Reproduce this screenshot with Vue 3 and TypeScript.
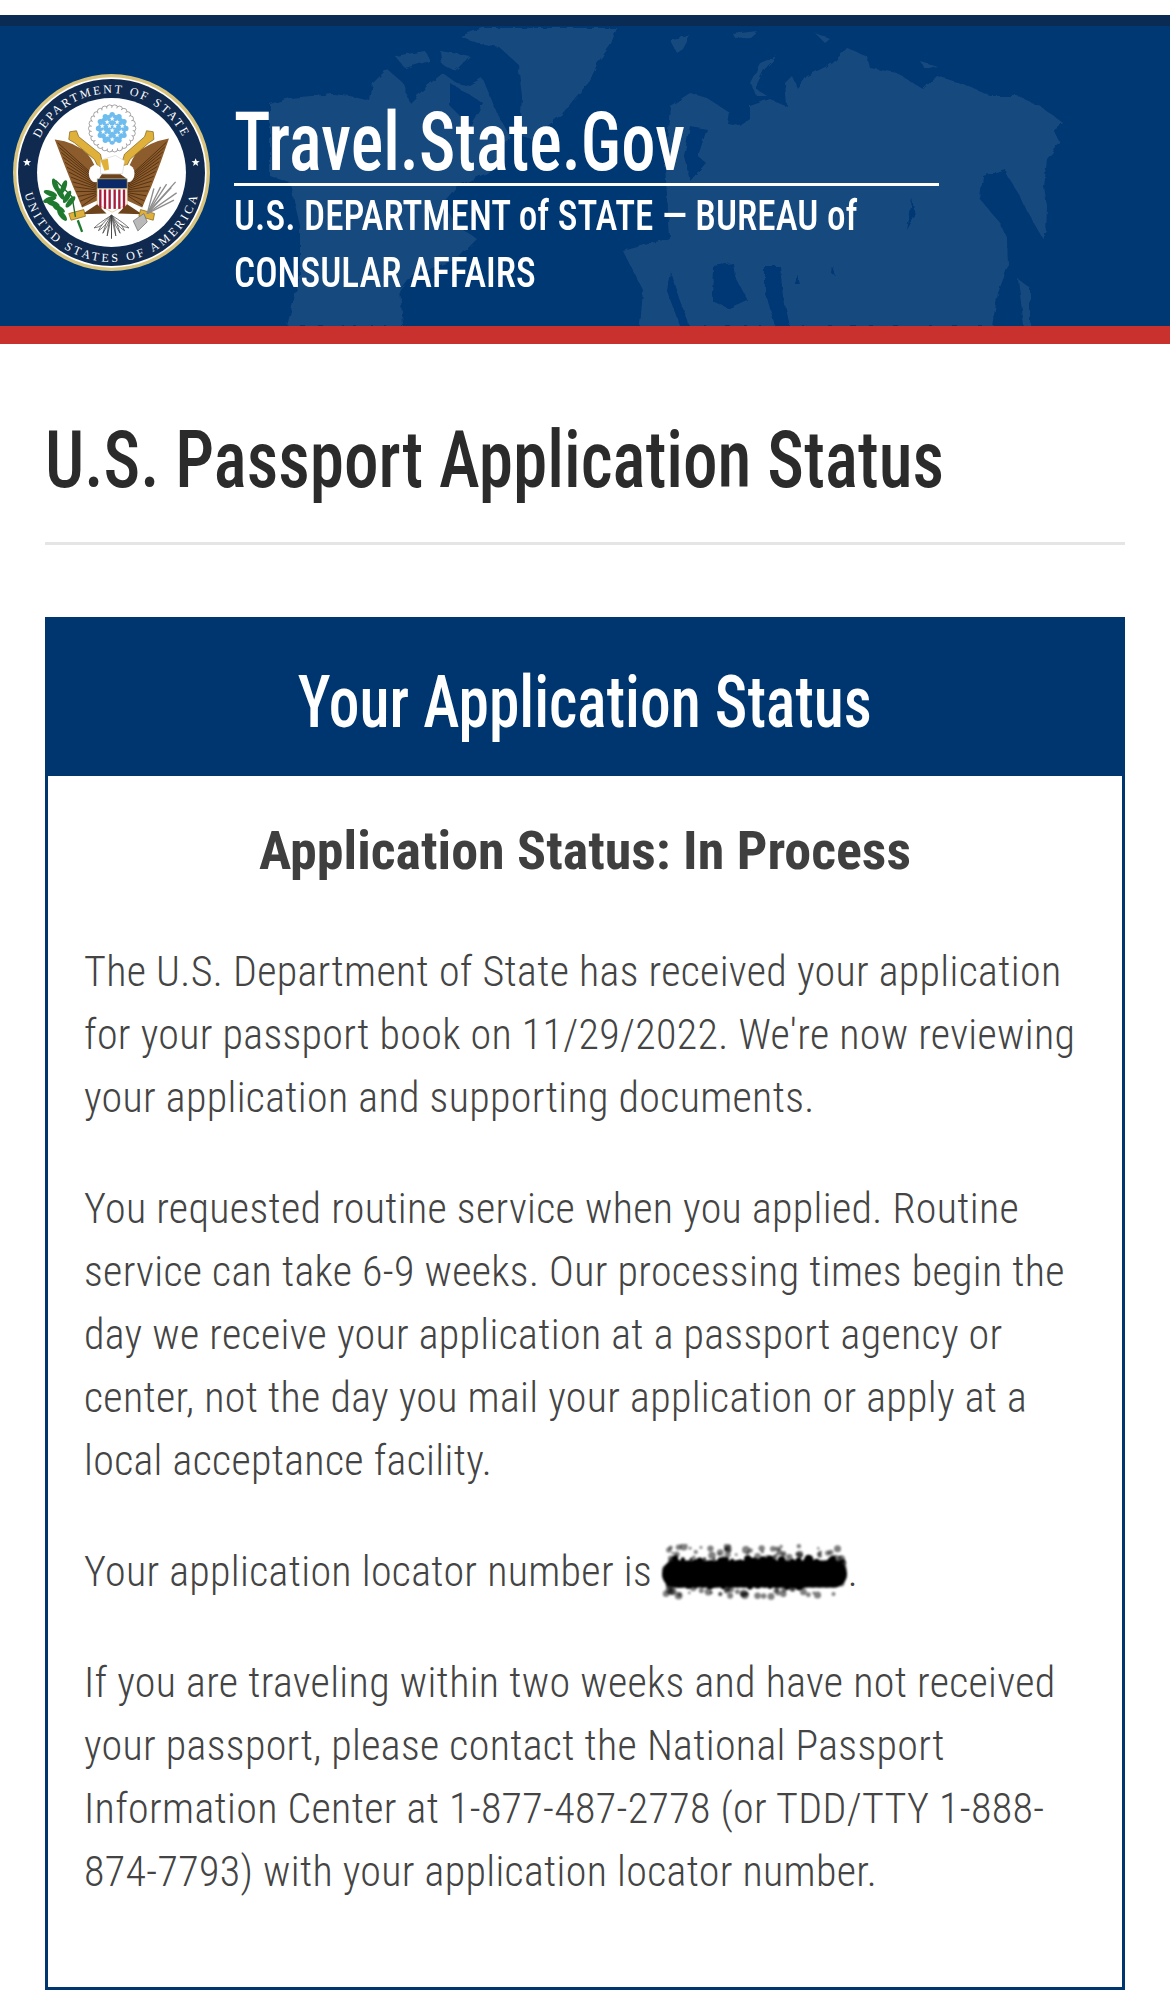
<template>
  <div class="page">
    <header class="banner">
      <svg class="map" viewBox="0 0 1170 300" aria-hidden="true">
        <defs>
          <filter id="rough" x="-5%" y="-5%" width="110%" height="110%">
            <feTurbulence type="fractalNoise" baseFrequency="0.12" numOctaves="2" seed="4" />
            <feDisplacementMap in="SourceGraphic" scale="5" />
          </filter>
        </defs>
        <g filter="url(#rough)">
          <path v-for="(d, i) in landPaths" :key="i" :d="d" fill="#17497e" />
          <path v-for="(d, i) in seaPaths" :key="'s' + i" :d="d" fill="#003874" />
        </g>
      </svg>
      <svg class="seal" viewBox="38 222 590 590" role="img" aria-label="Seal of the U.S. Department of State">
        <defs>
          <path id="arcTop" d="M 95 517 A 238 238 0 0 1 571 517" />
          <path id="arcBottom" d="M 65 517 A 268 268 0 0 0 601 517" />
        </defs>
        <circle cx="333" cy="517" r="295" fill="#d8c47e" />
        <circle cx="333" cy="517" r="285" fill="#fff" />
        <circle cx="333" cy="517" r="280" fill="#10294f" />
        <circle cx="333" cy="517" r="223" fill="#fff" />
        <text class="seal-text top"><textPath href="#arcTop" startOffset="50%" text-anchor="middle">DEPARTMENT OF STATE</textPath></text>
        <text class="seal-text bottom"><textPath href="#arcBottom" startOffset="50%" text-anchor="middle">UNITED STATES OF AMERICA</textPath></text>
        <polygon v-for="c in ringStars" :key="c[0]" :points="star(c[0], c[1], 13)" fill="#fff" />
        <!-- glory above the eagle -->
        <circle v-for="(s, i) in scallops" :key="i" :cx="s[0]" :cy="s[1]" r="9" fill="#fff" stroke="#777" stroke-width="2" />
        <circle cx="335" cy="385" r="62" fill="#fff" />
        <circle v-for="(s, i) in innerScallops" :key="'b' + i" :cx="s[0]" :cy="s[1]" r="8" fill="#6fbcee" />
        <circle cx="335" cy="385" r="42" fill="#6fbcee" />
        <polygon v-for="c in gloryStars" :key="c[0] + '-' + c[1]" :points="star(c[0], c[1], 8)" fill="#fff" />
        <!-- wings -->
        <path d="M163 418 Q225 425 262 462 Q285 490 292 530 L292 600 L245 622 Q232 590 218 560 Q190 490 163 418 Z" fill="#8d5c2c" />
        <path d="M505 415 Q445 425 405 462 Q385 490 378 530 L378 600 L425 622 Q438 590 452 560 Q480 490 505 415 Z" fill="#8d5c2c" />
        <g stroke="#4a2b10" stroke-width="2.5">
          <line v-for="(f, i) in feathers" :key="i" :x1="f[0]" :y1="f[1]" :x2="f[2]" :y2="f[3]" />
        </g>
        <!-- ribbons -->
        <path d="M208 395 L228 392 L235 410 L300 462 L308 500 L292 498 L282 478 L222 428 L205 418 Z" fill="#e0b13a" stroke="#7a5a10" stroke-width="2" />
        <path d="M458 395 L438 392 L432 410 L372 462 L362 495 L380 495 L388 478 L445 428 L460 418 Z" fill="#e0b13a" stroke="#7a5a10" stroke-width="2" />
        <!-- body, head and shield -->
        <ellipse cx="285" cy="520" rx="20" ry="26" fill="#fff" />
        <ellipse cx="382" cy="520" rx="20" ry="26" fill="#fff" />
        <path d="M300 480 L345 466 L372 482 L366 520 L300 520 Z" fill="#fff" stroke="#c9c9c9" stroke-width="1.5" />
        <path d="M300 480 L322 476 L326 508 L312 512 Z" fill="#e0b13a" />
        <path d="M296 535 L304 522 L360 522 L378 535 L382 560 L290 560 Z" fill="#6d431c" />
        <rect x="290" y="536" width="90" height="30" fill="#0c2a68" stroke="#d8c47e" stroke-width="2" />
        <path d="M290 566 H380 V612 L335 636 L290 612 Z" fill="#fff" stroke="#d8c47e" stroke-width="2" />
        <rect v-for="x in stripeXs" :key="x" :x="x" y="568" width="7" height="58" fill="#a81f3d" />
        <!-- lower feathers and tail -->
        <path d="M245 642 L290 612 L318 640 Z" fill="#6d431c" />
        <path d="M425 642 L380 612 L352 640 Z" fill="#6d431c" />
        <g fill="#fff" stroke="#333" stroke-width="2">
          <path v-for="(d, i) in tailPaths" :key="i" :d="d" />
        </g>
        <!-- talons, olive branch, arrows -->
        <path d="M205 640 L250 628 L255 648 L212 660 Z" fill="#e0b13a" stroke="#7a5a10" stroke-width="2" />
        <path d="M462 640 L420 628 L415 648 L458 660 Z" fill="#e0b13a" stroke="#7a5a10" stroke-width="2" />
        <path d="M225 650 L215 590 L165 540" stroke="#1e6b2a" stroke-width="4" fill="none" />
        <ellipse v-for="(l, i) in leaves" :key="i" :cx="l[0]" :cy="l[1]" rx="21" ry="8" :transform="`rotate(${l[2]} ${l[0]} ${l[1]})`" fill="#1f7a30" />
        <path d="M232 660 L245 695" stroke="#1f7a30" stroke-width="7" />
        <g stroke="#8d8d8d" stroke-width="4">
          <line v-for="(a, i) in arrows" :key="i" x1="440" y1="640" :x2="a[0]" :y2="a[1]" />
        </g>
        <path d="M398 662 L430 640 L440 665 L412 692 Z" fill="#b9b9b9" stroke="#666" stroke-width="2" />
      </svg>
      <div class="banner-text">
        <div class="site-name"><span>Travel.State.Gov</span></div>
        <div class="agency"><span>U.S. DEPARTMENT of STATE — BUREAU of</span><br /><span>CONSULAR AFFAIRS</span></div>
      </div>
    </header>

    <main class="content">
      <h1 class="page-title"><span>U.S. Passport Application Status</span></h1>
      <section class="panel">
        <h2 class="panel-head"><span>Your Application Status</span></h2>
        <div class="panel-body">
          <h3 class="status">Application Status: In Process</h3>
          <p>The U.S. Department of State has received your application<br />for your passport book on 11/29/2022. We're now reviewing<br />your application and supporting documents.</p>
          <p>You requested routine service when you applied. Routine<br />service can take 6-9 weeks. Our processing times begin the<br />day we receive your application at a passport agency or<br />center, not the day you mail your application or apply at a<br />local acceptance facility.</p>
          <p>Your application locator number is <svg class="scribble" viewBox="0 0 190 58" aria-hidden="true"><circle v-for="(b, i) in blots" :key="i" :cx="b[0]" :cy="b[1]" :r="b[2]" fill="#000" :opacity="b[3]" /></svg>.</p>
          <p>If you are traveling within two weeks and have not received<br />your passport, please contact the National Passport<br />Information Center at 1-877-487-2778 (or TDD/TTY 1-888-<br />874-7793) with your application locator number.</p>
        </div>
      </section>
    </main>
  </div>
</template>

<script setup lang="ts">
// map traced in the banner's own coordinates (1170 x 300)
const landPaths: string[] = [
  // greenland
  'M460 10 L483 2 L617 2 L610 20 L598 36 L590 55 L575 72 L562 88 L545 102 L532 114 L520 110 L522 70 L518 38 L500 22 L480 18 Z',
  // north america
  'M270 78 L290 72 L333 68 L350 70 L370 75 L373 57 L387 43 L403 57 L410 77 L427 60 L443 47 L457 57 L470 60 L483 53 L490 70 L497 87 L510 110 L503 123 L503 133 L487 147 L457 160 L443 177 L457 200 L477 213 L457 233 L410 250 L400 263 L403 300 L287 300 L300 250 L300 200 L290 157 L270 150 Z',
  // eurasia and africa
  'M670 80 L690 67 L707 72 L730 87 L728 98 L740 100 L750 93 L750 80 L770 73 L787 80 L785 57 L792 50 L798 63 L807 50 L833 37 L847 22 L867 30 L870 42 L897 47 L913 57 L923 63 L937 50 L963 58 L990 70 L1017 70 L1040 80 L1063 97 L1053 103 L1060 117 L1047 133 L1042 180 L1047 205 L1043 213 L1027 185 L1020 170 L1006 148 L1005 143 L983 150 L980 173 L1000 197 L1007 213 L1008 240 L998 267 L992 300 L640 300 L643 265 L623 225 L670 212 L665 140 Z',
  // kamchatka and japan
  'M1027 125 L1040 135 L1047 180 L1046 208 L1035 190 L1026 150 Z',
  'M1018 253 L1030 262 L1030 300 L1024 300 Z',
  // novaya zemlya
  'M750 57 L760 37 L777 30 L764 44 L755 62 L767 70 L757 70 Z',
  // arctic islands
  'M670 13 L690 10 L683 23 L677 27 Z',
  'M733 8 L757 5 L750 11 L735 12 Z',
  'M815 7 L830 13 L825 17 Z',
  'M920 35 L937 40 L925 43 Z',
  'M395 30 L425 25 L430 35 L405 42 Z',
  'M440 25 L470 30 L455 45 L442 38 Z'
]
const seaPaths: string[] = [
  // hudson bay
  'M450 57 L483 77 L470 100 L450 80 Z',
  // baltic
  'M690 100 L707 103 L698 130 L706 137 L690 155 L684 130 Z',
  // black sea and caspian
  'M713 240 L733 237 L735 250 L748 275 L730 283 L712 275 Z',
  'M765 240 L780 240 L783 270 L790 300 L775 300 L765 265 Z',
  // baikal
  'M912 172 L915 190 L907 204 L910 188 Z',
  // small lakes
  'M833 240 L836 250 L832 248 Z',
  'M797 248 L800 258 L795 258 Z',
  // mediterranean edge
  'M670 245 L680 275 L690 300 L680 300 L667 265 Z'
]

// five-point star polygon around a centre
function star(cx: number, cy: number, r: number): string {
  const pts: string[] = []
  for (let i = 0; i < 10; i++) {
    const rad = i % 2 === 0 ? r : r * 0.42
    const a = -Math.PI / 2 + (i * Math.PI) / 5
    pts.push(`${(cx + rad * Math.cos(a)).toFixed(1)},${(cy + rad * Math.sin(a)).toFixed(1)}`)
  }
  return pts.join(' ')
}

function ringOf(count: number, radius: number): number[][] {
  const out: number[][] = []
  for (let i = 0; i < count; i++) {
    const a = (i / count) * Math.PI * 2
    out.push([335 + radius * Math.cos(a), 385 + radius * Math.sin(a)])
  }
  return out
}
const scallops = ringOf(26, 62)
const innerScallops = ringOf(12, 41)

const ringStars: number[][] = [[80, 487], [585, 487]]
const gloryStars: number[][] = [
  [335, 356], [320, 366], [350, 366], [305, 378], [327, 378], [343, 378], [365, 378],
  [335, 391], [308, 395], [362, 395], [320, 405], [350, 405], [335, 418]
]

// feathers fan from the wing root out to the leading edge, both sides mirrored
const feathers: number[][] = []
for (let i = 0; i < 14; i++) {
  const t = i / 13
  const x = 172 + t * 72
  const y = 428 + t * 190
  feathers.push([x, y, 290, 535 + t * 50])
  feathers.push([670 - x, y - 2, 380, 535 + t * 50])
}

const stripeXs: number[] = [296, 310, 324, 339, 353, 367]

const tailPaths: string[] = []
for (let i = -4; i <= 4; i++) {
  tailPaths.push(`M333 645 Q${333 + i * 10} 670 ${333 + i * 13} ${715 - Math.abs(i) * 8} Q${333 + i * 6} 680 333 645 Z`)
}

const leaves: number[][] = [
  [165, 555, 70], [150, 580, 20], [190, 560, 110], [158, 610, 20], [200, 590, 120],
  [175, 625, 30], [210, 605, 130], [185, 645, 50], [148, 598, 160], [180, 580, 60]
]

const arrows: number[][] = [[460, 565], [480, 560], [498, 552], [512, 562], [525, 545], [528, 578], [520, 600]]

// seeded scatter so the scribble comes out the same every time
let seed = 41
function rnd(): number {
  seed = (seed * 16807) % 2147483647
  return seed / 2147483647
}
const blots: number[][] = []
for (let i = 0; i < 520; i++) {
  const x = 4 + rnd() * 182
  const y = i < 300 ? 14 + rnd() * 28 : 1 + rnd() * 52
  const inner = y > 14 && y < 44 && x > 12 && x < 176
  blots.push([+x.toFixed(1), +y.toFixed(1), +(1 + rnd() * 3).toFixed(1), inner ? 1 : 0.5])
}
for (let x = 14; x < 178; x += 7) {
  blots.push([x, 30, 14, 1])
}
</script>

<style scoped>
.page { width: 1170px; height: 2010px; overflow: hidden; background: #fff; }

.banner {
  position: relative;
  margin-top: 15px;
  height: 300px;
  border-top: 11px solid #0a2b53;
  border-bottom: 18px solid #c9312f;
  background: #003874;
  display: flex;
  align-items: flex-start;
  overflow: hidden;
}
.map { position: absolute; left: 0; top: 0; width: 1170px; height: 300px; }
.seal { position: relative; width: 197px; height: 197px; margin: 48px 0 0 13px; flex: none; }
.seal-text { font-family: "Liberation Serif", serif; font-size: 36px; fill: #fff; }
.seal-text.top { letter-spacing: 7px; }
.seal-text.bottom { letter-spacing: 9px; }

.banner-text { position: relative; margin: 52px 0 0 24px; width: 705px; color: #fff; font-family: Roboto, sans-serif; font-stretch: 75%; white-space: nowrap; }
.site-name {
  padding-top: 24px;
  font-size: 81px;
  font-weight: 500;
  line-height: 81px;
  border-bottom: 3px solid #fff;
}
.site-name span, .agency span, .page-title span {
  display: inline-block;
  transform-origin: left center;
}
.site-name span { transform: scaleX(0.847); }
.agency { margin-top: 1px; font-weight: 500; font-size: 42px; line-height: 57px; }
.agency span { transform: scaleX(0.886); }

.content { padding: 0 45px; }
.page-title {
  margin: 0;
  padding: 71px 0 37px;
  border-bottom: 3px solid #e5e5e5;
  font-family: Roboto, sans-serif;
  font-stretch: 75%;
  font-weight: 500;
  font-size: 80px;
  line-height: 90px;
  white-space: nowrap;
  color: #2b2b2b;
}
.page-title span { transform: scaleX(0.865); }
.panel { box-sizing: border-box; margin-top: 72px; border: 3px solid #003670; border-top: 0; height: 1373px; }
.panel-head {
  margin: 0 -3px;
  height: 159px;
  background: #003670;
  color: #fff;
  text-align: center;
  font-family: Roboto, sans-serif;
  font-stretch: 75%;
  font-weight: 500;
  font-size: 73px;
  line-height: 170px;
}
.panel-head span { display: inline-block; transform: scaleX(0.842); }
.panel-body { padding: 0 36px; }
.status {
  margin: 0 -8px;
  padding: 45px 0 59px;
  text-align: center;
  font-family: Roboto, sans-serif;
  font-stretch: 75%;
  font-weight: 700;
  font-size: 54px;
  line-height: 60px;
  color: #3f3f3f;
}
p {
  margin: 0 0 48px;
  font-family: Roboto, sans-serif;
  font-stretch: 75%;
  font-weight: 350;
  font-size: 42px;
  letter-spacing: 0.32px;
  line-height: 63px;
  white-space: nowrap;
  color: #444;
}
.scribble { width: 186px; height: 58px; vertical-align: -16px; filter: blur(1px); }
</style>
